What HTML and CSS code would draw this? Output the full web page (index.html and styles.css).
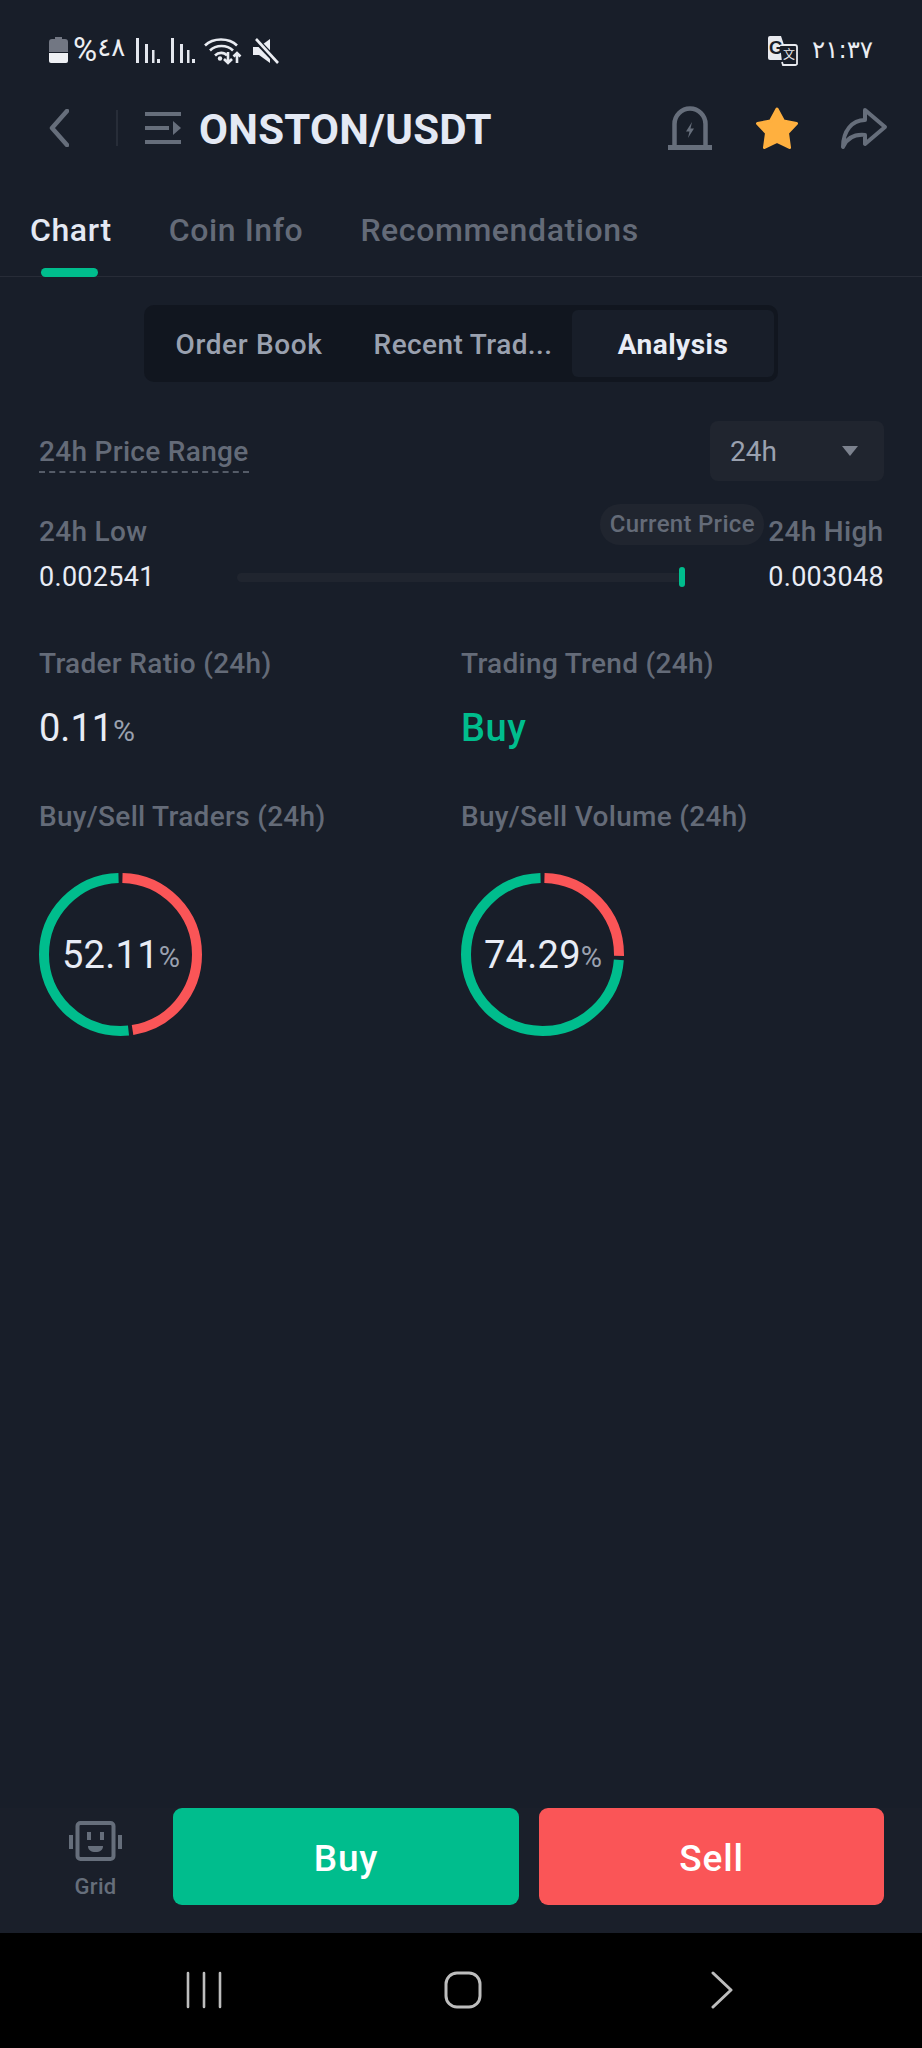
FILE: index.html
```html
<!DOCTYPE html>
<html lang="en">
<head>
<meta charset="utf-8">
<title>ONSTON/USDT</title>
<link rel="stylesheet" href="styles.css">
</head>
<body>
<div class="app">
  <div class="status">
    <div class="status-left">
      <svg class="st-batt" width="19" height="26" viewBox="0 0 19 26"><path d="M6 0h7v2h3a3 3 0 0 1 3 3v10H0V5a3 3 0 0 1 3-3h3z" fill="#727783"/><path d="M0 16h19v8a2 2 0 0 1-2 2H2a2 2 0 0 1-2-2z" fill="#eef0f4"/></svg>
      <span class="st-pct" dir="ltr"><span class="st-sym">%</span><span class="st-num">٤٨</span></span>
      <svg class="st-sig" width="24" height="25" viewBox="0 0 24 25"><g fill="#e4e7ee"><rect x="0" y="0" width="3" height="25"/><rect x="9" y="6" width="3" height="19"/><rect x="16" y="12" width="2.5" height="13"/><rect x="21" y="21" width="3" height="4"/></g></svg>
      <svg class="st-sig2" width="24" height="25" viewBox="0 0 24 25"><g fill="#e4e7ee"><rect x="0" y="0" width="3" height="25"/><rect x="9" y="6" width="3" height="19"/><rect x="16" y="12" width="2.5" height="13"/><rect x="21" y="21" width="3" height="4"/></g></svg>
      <svg class="st-wifi" width="38" height="28" viewBox="0 0 38 28"><g fill="none" stroke="#e8ebf1" stroke-width="2.6"><path d="M1 8.5C9 .5 25 .5 33 8.5"/><path d="M6 13.5C12 7.5 23 7.5 29 13.5"/><path d="M11 18.5c3.5-3.5 9-3.500 12 0"/><path d="M24 15v11M20 22l4 4 4-4"/><path d="M33 26V16M29.500 19.500l3.500-3.500 3.500 3.500"/></g><circle cx="16" cy="21.500" r="2.200" fill="#e8ebf1"/></svg>
      <svg class="st-mute" width="26" height="26" viewBox="0 0 26 26"><path d="M0 9h6l11-8v24L6 17H0z" fill="#eceef3"/><path d="M3 2l22 23" stroke="#181e29" stroke-width="6"/><path d="M3 1l22 24" stroke="#eceef3" stroke-width="2.600"/></svg>
    </div>
    <div class="status-right">
      <svg width="30" height="30" viewBox="0 0 30 30"><path d="M2 0h11l8 24H2a2 2 0 0 1-2-2V2a2 2 0 0 1 2-2z" fill="#e8eaef"/><path d="M12 9h15a2 2 0 0 1 2 2v17a2 2 0 0 1-2 1H15l-1-3" fill="#181e29" stroke="#e8eaef" stroke-width="1.800"/><text class="tr-g" x="1" y="18">G</text><text class="tr-x" x="15" y="23">文</text></svg>
      <span class="st-time" dir="ltr">٢١:٣٧</span>
    </div>
  </div>

  <header class="head">
    <svg class="h-back" width="20" height="38" viewBox="0 0 20 38"><path d="M18 2L3 19l15 17" fill="none" stroke="#666e7b" stroke-width="4.500" stroke-linecap="round" stroke-linejoin="round"/></svg>
    <span class="h-sep"></span>
    <svg class="h-menu" width="36" height="32" viewBox="0 0 36 32"><g fill="#666e7b"><rect width="36" height="4"/><rect y="14" width="24" height="4"/><polygon points="28,9 36,16 28,23"/><rect y="28" width="36" height="4"/></g></svg>
    <h1 class="h-title">ONSTON/USDT</h1>
    <svg class="h-bell" width="44" height="44" viewBox="0 0 44 44"><path d="M6.500 41V18a15.500 15.500 0 0 1 31 0v23" fill="none" stroke="#666e7b" stroke-width="4.500"/><rect y="39" width="44" height="5" fill="#666e7b"/><polygon points="24,16 18,25.500 21.500,25.500 20,32 26,22.500 22.500,22.500" fill="#666e7b"/></svg>
    <svg class="h-star" width="44" height="45" viewBox="0 0 44 45"><polygon points="22,3 28.500,15 41.500,17.500 32.500,27 34.500,41.500 22,35.500 9.500,41.500 11.500,27 2.500,17.500 15.500,15" fill="#ffb03f" stroke="#ffb03f" stroke-width="3" stroke-linejoin="round"/></svg>
    <svg class="h-share" width="48" height="44" viewBox="0 0 48 44"><path d="M25 4l20 17-20 17v-9C14 28 7 32 3 41 3 25 12 14 25 14z" fill="none" stroke="#666e7b" stroke-width="4" stroke-linejoin="round"/></svg>
  </header>

  <nav class="tabs">
    <a class="tab tab-on">Chart<i class="tab-bar"></i></a>
    <a class="tab">Coin Info</a>
    <a class="tab">Recommendations</a>
  </nav>

  <main class="main">
    <div class="seg">
      <span class="seg-item">Order Book</span>
      <span class="seg-item">Recent Trad...</span>
      <span class="seg-item seg-on">Analysis</span>
    </div>

    <div class="range-head">
      <span class="range-label">24h Price Range</span>
      <span class="drop">24h<i class="drop-caret"></i></span>
    </div>

    <div class="range">
      <span class="muted">24h Low</span>
      <span></span>
      <span class="muted">24h High</span>
      <span class="val">0.002541</span>
      <div class="track">
        <span class="pill">Current Price</span>
        <i class="mark"></i>
      </div>
      <span class="val">0.003048</span>
    </div>

    <div class="stats">
      <div class="stat">
        <div class="muted">Trader Ratio (24h)</div>
        <div class="big">0.11<small>%</small></div>
      </div>
      <div class="stat">
        <div class="muted">Trading Trend (24h)</div>
        <div class="big big-buy">Buy</div>
      </div>
      <div class="stat">
        <div class="muted">Buy/Sell Traders (24h)</div>
        <div class="ring">
          <svg width="163" height="163" viewBox="0 0 163 163"><g fill="none" stroke-width="10" transform="rotate(-90 81.500 81.500)"><circle cx="81.500" cy="81.500" r="76.500" pathLength="100" stroke="#fa5557" stroke-dasharray="47.050 52.950" stroke-dashoffset="-0.420"/><circle cx="81.500" cy="81.500" r="76.500" pathLength="100" stroke="#00bd8d" stroke-dasharray="51.270 48.730" stroke-dashoffset="-48.310"/></g></svg>
          <span class="ring-val">52.11<small>%</small></span>
        </div>
      </div>
      <div class="stat">
        <div class="muted">Buy/Sell Volume (24h)</div>
        <div class="ring">
          <svg width="163" height="163" viewBox="0 0 163 163"><g fill="none" stroke-width="10" transform="rotate(-90 81.500 81.500)"><circle cx="81.500" cy="81.500" r="76.500" pathLength="100" stroke="#fa5557" stroke-dasharray="24.870 75.130" stroke-dashoffset="-0.420"/><circle cx="81.500" cy="81.500" r="76.500" pathLength="100" stroke="#00bd8d" stroke-dasharray="73.450 26.550" stroke-dashoffset="-26.130"/></g></svg>
          <span class="ring-val">74.29<small>%</small></span>
        </div>
      </div>
    </div>
  </main>

  <footer class="foot">
    <div class="grid-btn">
      <svg width="53" height="40" viewBox="0 0 53 40"><rect x="8.500" y="2" width="36" height="36" rx="3" fill="none" stroke="#666e7b" stroke-width="4"/><rect x="0" y="14" width="4" height="14" fill="#666e7b"/><rect x="49" y="14" width="4" height="14" fill="#666e7b"/><rect x="18" y="11" width="4" height="8" fill="#666e7b"/><rect x="31" y="11" width="4" height="8" fill="#666e7b"/><path d="M19 25h15c0 4-3 6-7.500 6S19 29 19 25z" fill="#666e7b"/></svg>
      <span class="grid-txt">Grid</span>
    </div>
    <button class="btn btn-buy">Buy</button>
    <button class="btn btn-sell">Sell</button>
  </footer>

  <div class="sysnav">
    <svg width="36" height="38" viewBox="0 0 36 38"><g stroke="#bdbdbd" stroke-width="2.600" stroke-linecap="round"><path d="M2 2v34M18 2v34M34 2v34"/></g></svg>
    <svg width="38" height="38" viewBox="0 0 38 38"><rect x="2" y="2" width="34" height="34" rx="11" fill="none" stroke="#bdbdbd" stroke-width="3"/></svg>
    <svg width="22" height="38" viewBox="0 0 22 38"><path d="M2 2l18 17L2 36" fill="none" stroke="#bdbdbd" stroke-width="3" stroke-linecap="round" stroke-linejoin="round"/></svg>
  </div>
</div>
</body>
</html>
```
FILE: styles.css
```css
* { box-sizing: border-box; }
html, body { margin: 0; padding: 0; background: #181e29; }
body { font-family: Roboto, "Liberation Sans", sans-serif; color: #e8ecf5; }
.app { width: 922px; height: 2048px; display: flex; flex-direction: column; background: #181e29; overflow: hidden; }

.status { height: 88px; flex: none; display: flex; justify-content: space-between; padding: 36px 49px 0 49px; }
.status-left { display: flex; align-items: flex-start; }
.status-right { display: flex; align-items: flex-start; gap: 14px; }
.st-batt { margin-top: 1px; }
.st-pct { display: flex; align-items: center; margin-left: 5px; height: 28px; color: #eceef3; direction: ltr; }
.st-sym { font-size: 33px; line-height: 28px; font-family: Roboto, sans-serif; margin-right: 1px; letter-spacing: -1px; }
.st-num { font-size: 26px; line-height: 24px; font-family: "DejaVu Sans", sans-serif; margin-top: -6px; letter-spacing: -1px; }
.st-sig { margin: 2px 0 0 11px; }
.st-sig2 { margin: 2px 0 0 11px; }
.st-wifi { margin: 1px 0 0 9px; }
.st-mute { margin: 2px 0 0 11px; }
.st-time { font-family: "DejaVu Sans", sans-serif; font-size: 24.5px; line-height: 28px; color: #eceef3; letter-spacing: -.5px; }
.tr-g { font: 700 18px "Liberation Sans", sans-serif; fill: #181e29; }
.tr-x { font: 400 12px "Noto Sans CJK SC", sans-serif; fill: #e8eaef; }

.head { height: 80px; flex: none; display: flex; align-items: center; padding-left: 49px; padding-right: 34px; }
.h-sep { width: 2px; height: 36px; margin-left: 47px; background: #272d38; }
.h-menu { margin-left: 27px; }
.h-title { margin: 3px 0 0 18px; font-size: 42px; font-weight: 700; line-height: 48px; color: #e4e9f4; letter-spacing: .3px; flex: 1; }
.h-star { margin-left: 43px; }
.h-share { margin-left: 41px; }

.tabs { height: 109px; display: flex; gap: 57px; padding: 42px 0 0 30px; border-bottom: 1px solid #272c37; flex: none; }
.tab { display: flex; flex-direction: column; align-items: center; font-size: 32px; line-height: 40px; color: #646b78; font-weight: 500; height: 66px; letter-spacing: .6px; white-space: nowrap; }
.tab-on { color: #e4e9f4; }
.tab-bar { width: 57px; height: 9px; margin-top: auto; margin-bottom: -1px; margin-right: 2px; border-radius: 5px; background: #00bd8d; }

.main { flex: 1; display: flex; flex-direction: column; padding: 28px 38px 0 39px; }
.seg { align-self: center; display: grid; grid-template-columns: 210px 212px 202px; justify-content: space-between; width: 634px; height: 77px; padding: 5px 4px 5px 0; border-radius: 10px; background: #11161f; margin-right: 1px; }
.seg-item { display: flex; align-items: center; justify-content: center; font-size: 28px; line-height: 36px; padding-top: 3px; color: #9aa1af; font-weight: 500; letter-spacing: .4px; white-space: nowrap; }
.seg-item:first-child { letter-spacing: .65px; }
.seg-on { background: #181e29; border-radius: 6px; color: #e8ecf5; font-weight: 700; letter-spacing: .5px; }

.range-head { display: flex; justify-content: space-between; align-items: center; height: 60px; margin-top: 39px; }
.range-label { font-size: 28px; line-height: 34px; color: #646b78; font-weight: 500; border-bottom: 2px dashed #555c68; padding-bottom: 2px; margin-top: 6px; letter-spacing: .3px; }
.drop { width: 174px; height: 60px; border-radius: 8px; background: #20252f; display: flex; align-items: center; justify-content: space-between; padding: 0 26px 0 20px; font-size: 28px; color: #9aa1af; }
.drop-caret { width: 0; height: 0; border-left: 8px solid transparent; border-right: 8px solid transparent; border-top: 10px solid #7c828e; }

.range { display: grid; grid-template-columns: auto 1fr auto; align-items: center; row-gap: 12px; margin-top: 34px; }
.muted { font-size: 28px; line-height: 34px; color: #646b78; font-weight: 500; white-space: nowrap; letter-spacing: .3px; }
.val { font-size: 27px; line-height: 32px; color: #e8ecf5; letter-spacing: .3px; }
.track { position: relative; height: 9px; margin: 0 83px 0 82px; border-radius: 5px; background: #20252f; }
.mark { position: absolute; right: 0; top: -6px; width: 6px; height: 20px; border-radius: 3px; background: #00bd8d; }
.pill { position: absolute; right: -79px; top: -69px; height: 41px; width: 164px; border-radius: 20px; background: #20252f; font-size: 24px; color: #646b78; font-weight: 500; display: flex; align-items: center; justify-content: center; white-space: nowrap; letter-spacing: .3px; }

.stats { display: grid; grid-template-columns: 422px 1fr; margin-top: 54px; row-gap: 46px; }
.stat .muted { line-height: 34px; }
.big { font-size: 38px; line-height: 46px; margin-top: 24px; color: #e8ecf5; }
.big small { font-size: 30px; color: #9aa1af; letter-spacing: -1px; }
.big-buy { color: #00bd8d; font-weight: 500; letter-spacing: .5px; }

.ring { position: relative; width: 163px; height: 163px; margin-top: 39px; }
.ring svg { display: block; }
.ring-val { position: absolute; inset: 0; display: flex; align-items: center; justify-content: center; font-size: 38px; letter-spacing: .3px; color: #e8ecf5; }
.ring-val small { font-size: 29px; color: #9aa1af; margin-top: 5px; letter-spacing: -1px; }

.foot { flex: none; height: 125px; display: flex; padding: 0 38px 0 69px; background: #1a1f2a; align-items: flex-start; }
.grid-btn { width: 53px; display: flex; flex-direction: column; align-items: center; padding-top: 13px; margin-right: 51px; }
.grid-txt { font-size: 22px; line-height: 26px; margin-top: 13px; color: #666e7b; font-weight: 500; letter-spacing: .3px; }
.btn { width: 346px; height: 97px; border: 0; border-radius: 9px; padding: 3px 0 0; font-family: inherit; font-size: 37px; font-weight: 500; color: #fff; margin: 0; letter-spacing: .8px; }
.btn-buy { background: #00bd8d; margin-right: 20px; }
.btn-sell { background: #fa5557; width: 345px; }

.sysnav { flex: none; height: 115px; background: #000; display: flex; align-items: flex-start; padding: 38px 0 0 186px; gap: 222px; }
.sysnav svg:last-child { margin-left: 7px; }
```
